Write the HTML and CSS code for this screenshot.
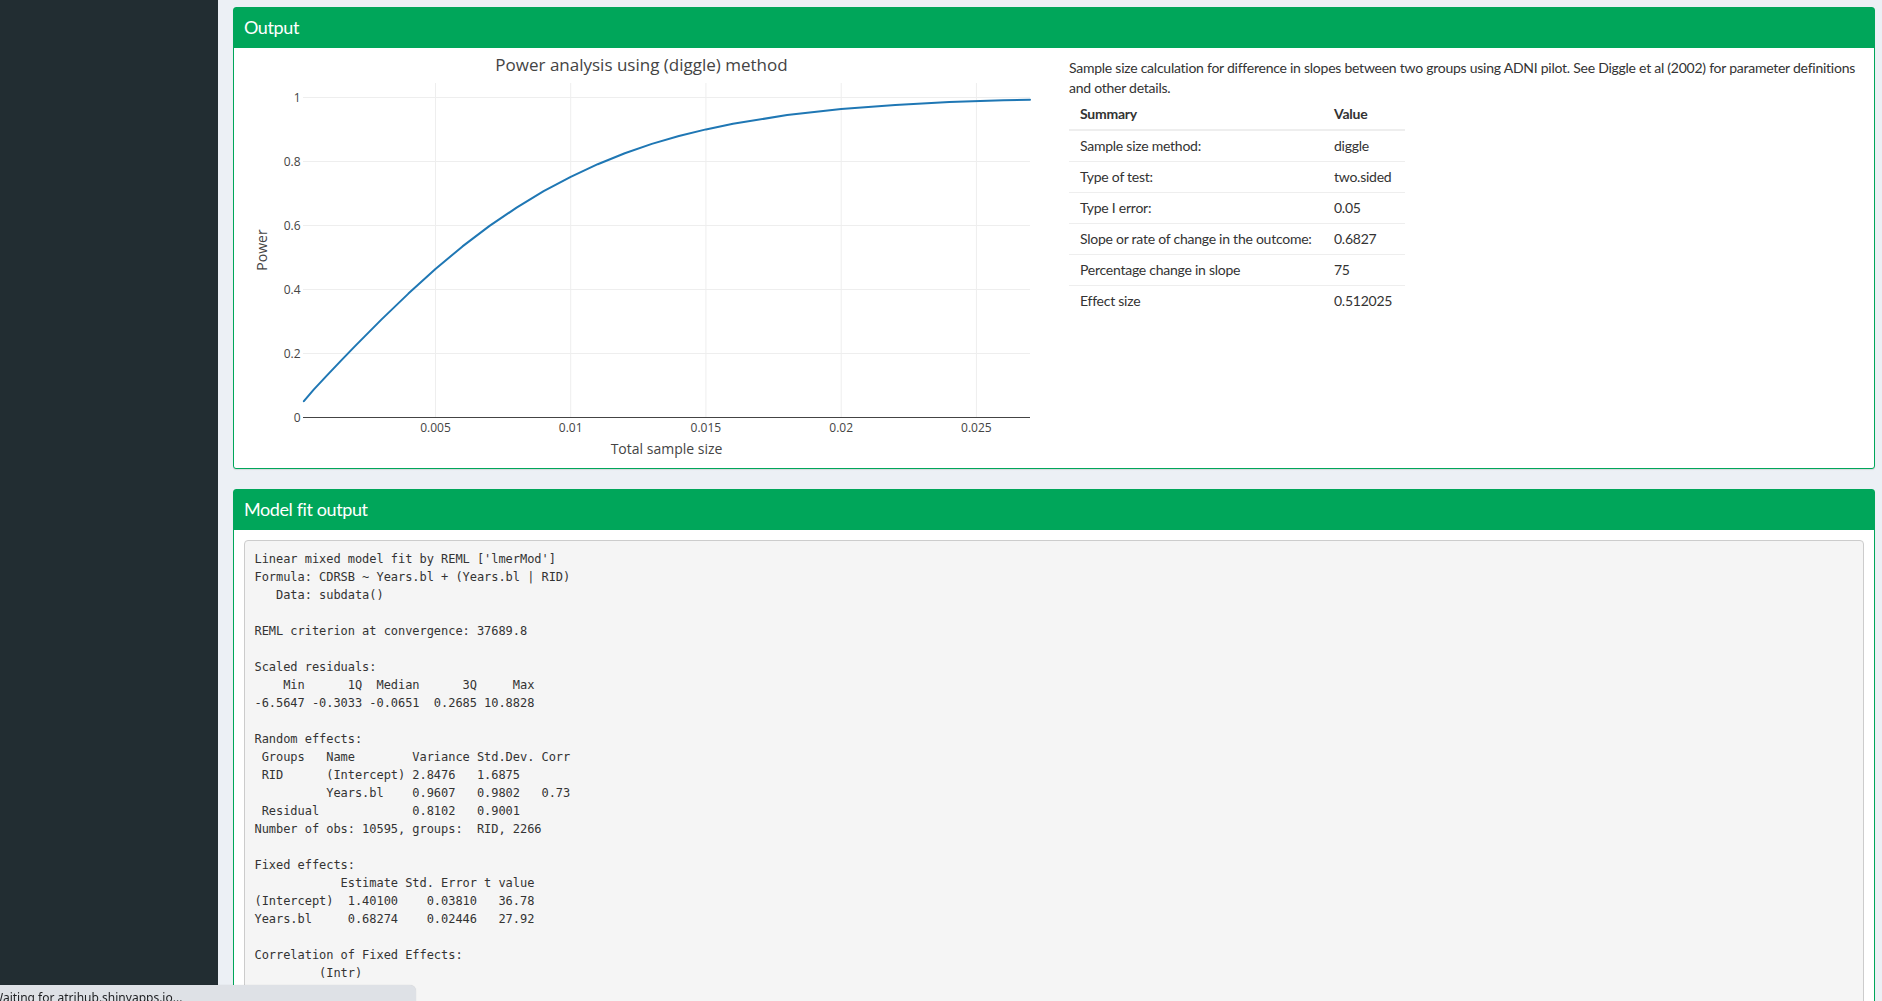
FILE: index.html
```
<!DOCTYPE html>
<html>
<head>
<meta charset="utf-8">
<title>Power analysis</title>
<link rel="stylesheet" href="styles.css">
</head>
<body>
<div class="wrapper">
  <aside class="sidebar"></aside>
  <main class="content">
    <section class="box">
      <div class="box-header"><h3 class="box-title">Output</h3></div>
      <div class="box-body two-col">
        <div class="col">
          <svg class="plot" width="795" height="400" viewBox="244 58 795 400" overflow="visible" xmlns="http://www.w3.org/2000/svg">
            <g class="grid" stroke="#eeeeee" stroke-width="1">
              <line x1="435.5" y1="83" x2="435.5" y2="417"/>
              <line x1="570.7" y1="83" x2="570.7" y2="417"/>
              <line x1="705.9" y1="83" x2="705.9" y2="417"/>
              <line x1="841.2" y1="83" x2="841.2" y2="417"/>
              <line x1="976.4" y1="83" x2="976.4" y2="417"/>
              <line x1="303" y1="97.5" x2="1030" y2="97.5"/>
              <line x1="303" y1="161.5" x2="1030" y2="161.5"/>
              <line x1="303" y1="225.5" x2="1030" y2="225.5"/>
              <line x1="303" y1="289.5" x2="1030" y2="289.5"/>
              <line x1="303" y1="353.5" x2="1030" y2="353.5"/>
            </g>
            <line x1="303" y1="417.5" x2="1030" y2="417.5" stroke="#444444" stroke-width="1"/>
            <polyline fill="none" stroke="#1f77b4" stroke-width="2" stroke-linejoin="round" stroke-linecap="round"
              points="303.9,401.2 313.7,389.6 327.25,375.1 340.8,360.9 354.3,346.9 381.35,319.6 408.4,293.6 435.45,269.0 462.5,246.4 489.55,225.9 516.6,207.6 543.65,191.2 570.7,176.8 597.75,164.2 624.8,153.3 651.85,143.9 678.9,136.0 705.95,129.4 733.0,123.8 787.1,115.1 841.2,109.0 895.3,104.9 949.4,102.1 1003.5,100.3 1030,99.7"/>
            <g class="ticks" font-family="'Open Sans', sans-serif" font-size="12" fill="#444444">
              <text x="300.5" y="421.5" text-anchor="end">0</text>
              <text x="300.5" y="357.5" text-anchor="end">0.2</text>
              <text x="300.5" y="293.5" text-anchor="end">0.4</text>
              <text x="300.5" y="229.5" text-anchor="end">0.6</text>
              <text x="300.5" y="165.5" text-anchor="end">0.8</text>
              <text x="300.5" y="101.5" text-anchor="end">1</text>
              <text x="435.5" y="431.5" text-anchor="middle">0.005</text>
              <text x="570.7" y="431.5" text-anchor="middle">0.01</text>
              <text x="705.9" y="431.5" text-anchor="middle">0.015</text>
              <text x="841.2" y="431.5" text-anchor="middle">0.02</text>
              <text x="976.4" y="431.5" text-anchor="middle">0.025</text>
            </g>
            <text x="666.5" y="454" text-anchor="middle" font-family="'Open Sans', sans-serif" font-size="14" fill="#444444">Total sample size</text>
            <text transform="translate(262,250) rotate(-90)" x="0" y="5" text-anchor="middle" font-family="'Open Sans', sans-serif" font-size="14" fill="#444444">Power</text>
            <text x="641.5" y="71" text-anchor="middle" font-family="'Open Sans', sans-serif" font-size="17" fill="#444444">Power analysis using (diggle) method</text>
          </svg>
        </div>
        <div class="col">
          <p class="desc">Sample size calculation for difference in slopes between two groups using ADNI pilot. See Diggle et al (2002) for parameter definitions and other details.</p>
          <table class="summary">
            <thead>
              <tr><th class="c1">Summary</th><th class="c2">Value</th></tr>
            </thead>
            <tbody>
              <tr><td>Sample size method:</td><td>diggle</td></tr>
              <tr><td>Type of test:</td><td>two.sided</td></tr>
              <tr><td>Type I error:</td><td>0.05</td></tr>
              <tr><td>Slope or rate of change in the outcome:</td><td>0.6827</td></tr>
              <tr><td>Percentage change in slope</td><td>75</td></tr>
              <tr><td>Effect size</td><td>0.512025</td></tr>
            </tbody>
          </table>
        </div>
      </div>
    </section>

    <section class="box">
      <div class="box-header"><h3 class="box-title">Model fit output</h3></div>
      <div class="box-body">
<pre class="rout">Linear mixed model fit by REML ['lmerMod']
Formula: CDRSB ~ Years.bl + (Years.bl | RID)
   Data: subdata()

REML criterion at convergence: 37689.8

Scaled residuals: 
    Min      1Q  Median      3Q     Max 
-6.5647 -0.3033 -0.0651  0.2685 10.8828 

Random effects:
 Groups   Name        Variance Std.Dev. Corr
 RID      (Intercept) 2.8476   1.6875       
          Years.bl    0.9607   0.9802   0.73
 Residual             0.8102   0.9001       
Number of obs: 10595, groups:  RID, 2266

Fixed effects:
            Estimate Std. Error t value
(Intercept)  1.40100    0.03810   36.78
Years.bl     0.68274    0.02446   27.92

Correlation of Fixed Effects:
         (Intr)
Years.bl 0.367 
</pre>
      </div>
    </section>
  </main>
</div>
<div class="status-bubble"><span class="status-text">Waiting for atrihub.shinyapps.io...</span></div>
</body>
</html>
```
FILE: styles.css
```
html, body {
  margin: 0;
  padding: 0;
  height: 1001px;
  overflow: hidden;
}

body {
  font-family: "Lato", "Noto Sans", sans-serif;
  font-size: 14px;
  line-height: 20px;
  letter-spacing: -0.25px;
  color: #333333;
  background: #ecf0f5;
}

.wrapper {
  display: flex;
  height: 1001px;
}

.sidebar {
  width: 218px;
  flex: 0 0 218px;
  background: #222d32;
}

.content {
  flex: 1;
  padding: 7px 7px 0 15px;
  overflow: hidden;
}

.box {
  background: #ffffff;
  border: 1px solid #00a65a;
  border-radius: 3px;
  box-shadow: 0 1px 1px rgba(0, 0, 0, 0.1);
  margin-bottom: 20px;
}

.box-header {
  background: #00a65a;
  color: #ffffff;
  padding: 10px;
}

.box-title {
  margin: 0;
  font-size: 18px;
  line-height: 19.8px;
  font-weight: normal;
  letter-spacing: -0.4px;
}

.box-body {
  padding: 10px;
}

.two-col {
  display: grid;
  grid-template-columns: 795px 795px;
  column-gap: 30px;
}

.plot {
  display: block;
  overflow: visible;
  letter-spacing: 0;
}

.desc {
  margin: 0 0 1px 0;
}

.summary {
  border-collapse: collapse;
  border-spacing: 0;
}

.summary th,
.summary td {
  padding: 5px 11px;
  text-align: left;
  white-space: nowrap;
  line-height: 20px;
}

.summary th {
  font-weight: bold;
  border-bottom: 2px solid #eeeeee;
}

.summary td {
  border-top: 1px solid #eeeeee;
}

.summary tbody tr:first-child td {
  border-top: none;
}

.summary .c1 {
  width: 232px;
}

.summary .c2 {
  width: 60px;
}

.rout {
  margin: 0;
  padding: 9.5px;
  background: #f5f5f5;
  border: 1px solid #cccccc;
  border-radius: 4px;
  font-family: "DejaVu Sans Mono", "Liberation Mono", monospace;
  font-size: 12px;
  letter-spacing: -0.05px;
  line-height: 18px;
  color: #333333;
  white-space: pre;
  overflow: hidden;
}

.status-bubble {
  position: fixed;
  left: 0;
  top: 985px;
  width: 416px;
  height: 30px;
  background: #dee1e6;
  border-top-right-radius: 6px;
  box-shadow: 0 0 1px rgba(0, 0, 0, 0.2);
  overflow: hidden;
}

.status-text {
  display: block;
  margin-left: -8px;
  padding-top: 5px;
  font-family: "Noto Sans", "Liberation Sans", sans-serif;
  font-size: 12px;
  line-height: 16px;
  letter-spacing: 0;
  color: #202124;
  white-space: nowrap;
}
```
